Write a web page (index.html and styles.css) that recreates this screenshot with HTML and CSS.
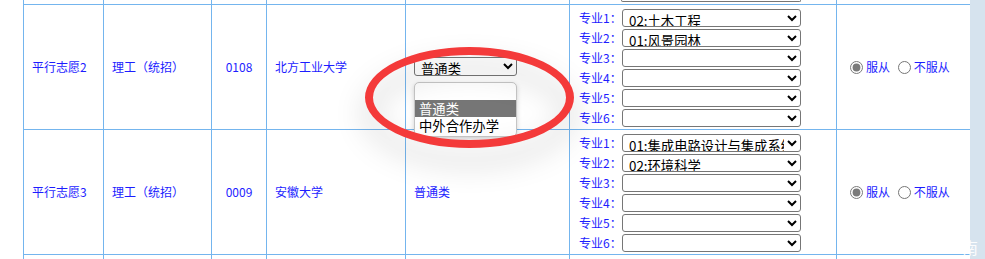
FILE: index.html
```html
<!DOCTYPE html>
<html lang="zh-CN">
<head>
<meta charset="utf-8">
<title>志愿表</title>
<link rel="stylesheet" href="styles.css">
</head>
<body>
<div class="page">
  <div class="main">
    <table class="vol">
      <colgroup>
        <col class="c1"><col class="c2"><col class="c3"><col class="c4"><col class="c5"><col class="c6"><col class="c7">
      </colgroup>
      <tr class="prev">
        <td></td><td></td><td></td><td></td><td></td>
        <td><div class="stub"></div></td>
        <td></td>
      </tr>
      <tr class="row">
        <td>平行志愿2</td>
        <td>理工（统招）</td>
        <td class="code">0108</td>
        <td>北方工业大学</td>
        <td>
          <select class="kind">
            <option>普通类</option>
          </select>
        </td>
        <td class="majors">
          <div class="mj"><span class="lbl">专业1：</span><select class="msel"><option>02:土木工程</option></select></div>
          <div class="mj"><span class="lbl">专业2：</span><select class="msel"><option>01:风景园林</option></select></div>
          <div class="mj"><span class="lbl">专业3：</span><select class="msel"><option></option></select></div>
          <div class="mj"><span class="lbl">专业4：</span><select class="msel"><option></option></select></div>
          <div class="mj"><span class="lbl">专业5：</span><select class="msel"><option></option></select></div>
          <div class="mj"><span class="lbl">专业6：</span><select class="msel"><option></option></select></div>
        </td>
        <td class="obey">
          <input type="radio" name="o2" checked><span>服从</span> <input type="radio" name="o2"><span>不服从</span>
        </td>
      </tr>
      <tr class="row">
        <td>平行志愿3</td>
        <td>理工（统招）</td>
        <td class="code">0009</td>
        <td>安徽大学</td>
        <td>普通类</td>
        <td class="majors">
          <div class="mj"><span class="lbl">专业1：</span><select class="msel"><option>01:集成电路设计与集成系统</option></select></div>
          <div class="mj"><span class="lbl">专业2：</span><select class="msel"><option>02:环境科学</option></select></div>
          <div class="mj"><span class="lbl">专业3：</span><select class="msel"><option></option></select></div>
          <div class="mj"><span class="lbl">专业4：</span><select class="msel"><option></option></select></div>
          <div class="mj"><span class="lbl">专业5：</span><select class="msel"><option></option></select></div>
          <div class="mj"><span class="lbl">专业6：</span><select class="msel"><option></option></select></div>
        </td>
        <td class="obey">
          <input type="radio" name="o3" checked><span>服从</span> <input type="radio" name="o3"><span>不服从</span>
        </td>
      </tr>
      <tr class="next">
        <td></td><td></td><td></td><td></td><td></td><td></td><td></td>
      </tr>
    </table>
  </div>
  <div class="strip"></div>

  <div class="popup">
    <div class="opt"></div>
    <div class="opt sel">普通类</div>
    <div class="opt">中外合作办学</div>
  </div>
  <div class="ring"></div>
  <div class="mark">南</div>
</div>
</body>
</html>
```
FILE: styles.css
```css
html, body {
  margin: 0;
  padding: 0;
  background: #ffffff;
  overflow: hidden;
}

.page {
  position: relative;
  display: flex;
  width: 985px;
  height: 259px;
  overflow: hidden;
  font-family: "Noto Sans CJK SC", "Noto Sans", sans-serif;
}

.main {
  width: 970px;
  background: #ffffff;
}

.strip {
  flex: 1;
  background: #d6e3ee;
}

.vol {
  border-collapse: collapse;
  table-layout: fixed;
  width: 947px;
  margin-left: 23px;
  font-size: 12px;
  color: #1d1dff;
}

.c1 { width: 80px; }
.c2 { width: 108px; }
.c3 { width: 55px; }
.c4 { width: 139px; }
.c5 { width: 164px; }
.c6 { width: 267px; }
.c7 { width: 134px; }

.vol td {
  border: 1px solid #74b5ee;
  padding: 0 8px;
  vertical-align: middle;
  line-height: 16px;
  white-space: nowrap;
}

.prev td {
  border-top: none;
  height: 4px;
  padding: 0;
  vertical-align: top;
}

.stub {
  margin-left: 51px;
  width: 178px;
  height: 1px;
  border: 1px solid #767676;
  border-top: none;
  border-radius: 0 0 3px 3px;
}

.row td {
  height: 118px;
}

.next td {
  height: 20px;
}

.vol td.code {
  text-align: center;
}

.kind {
  width: 103px;
  height: 19px;
  font-size: 13.33px;
  font-family: "Noto Sans CJK SC", sans-serif;
  color: #000000;
  padding: 0 0 0 2px;
  border: 1px solid #767676;
  border-radius: 3px;
  background: #ffffff;
  line-height: 16px;
}

.vol td.majors {
  padding: 4px 8px 2px 9px;
}

.mj {
  display: flex;
  align-items: center;
  height: 18px;
  margin-bottom: 2px;
}

.mj:last-child {
  margin-bottom: 0;
}

.lbl {
  width: 43px;
  flex: none;
}

.msel {
  width: 179px;
  height: 18px;
  font-size: 13.33px;
  font-family: "Noto Sans CJK SC", sans-serif;
  color: #000000;
  padding: 0 0 0 2px;
  border: 1px solid #767676;
  border-radius: 3px;
  background: #ffffff;
  line-height: 16px;
}

.obey input {
  margin: 0 3px 0 5px;
  width: 13px;
  height: 13px;
  vertical-align: -2px;
  accent-color: #7a7a7a;
}

.popup {
  position: absolute;
  left: 414px;
  top: 82px;
  width: 101px;
  border: 1px solid #c6c6c6;
  border-radius: 5px;
  background: #ffffff;
  box-shadow: 0 2px 5px rgba(0, 0, 0, 0.18);
  overflow: hidden;
  font-size: 13.33px;
  color: #000000;
  line-height: 17px;
  padding-bottom: 2px;
}

.opt {
  height: 17px;
  padding-left: 4px;
  white-space: nowrap;
}

.opt.sel {
  background: #767676;
  color: #ffffff;
}

.ring {
  position: absolute;
  left: 365px;
  top: 47px;
  width: 193px;
  height: 85px;
  border: 8px solid #f43a3a;
  border-radius: 50%;
  filter: drop-shadow(0 16px 14px rgba(0, 0, 0, 0.22));
}

.mark {
  position: absolute;
  left: 962px;
  top: 238px;
  font-size: 16px;
  line-height: 18px;
  color: rgba(255, 255, 255, 0.92);
}
```
